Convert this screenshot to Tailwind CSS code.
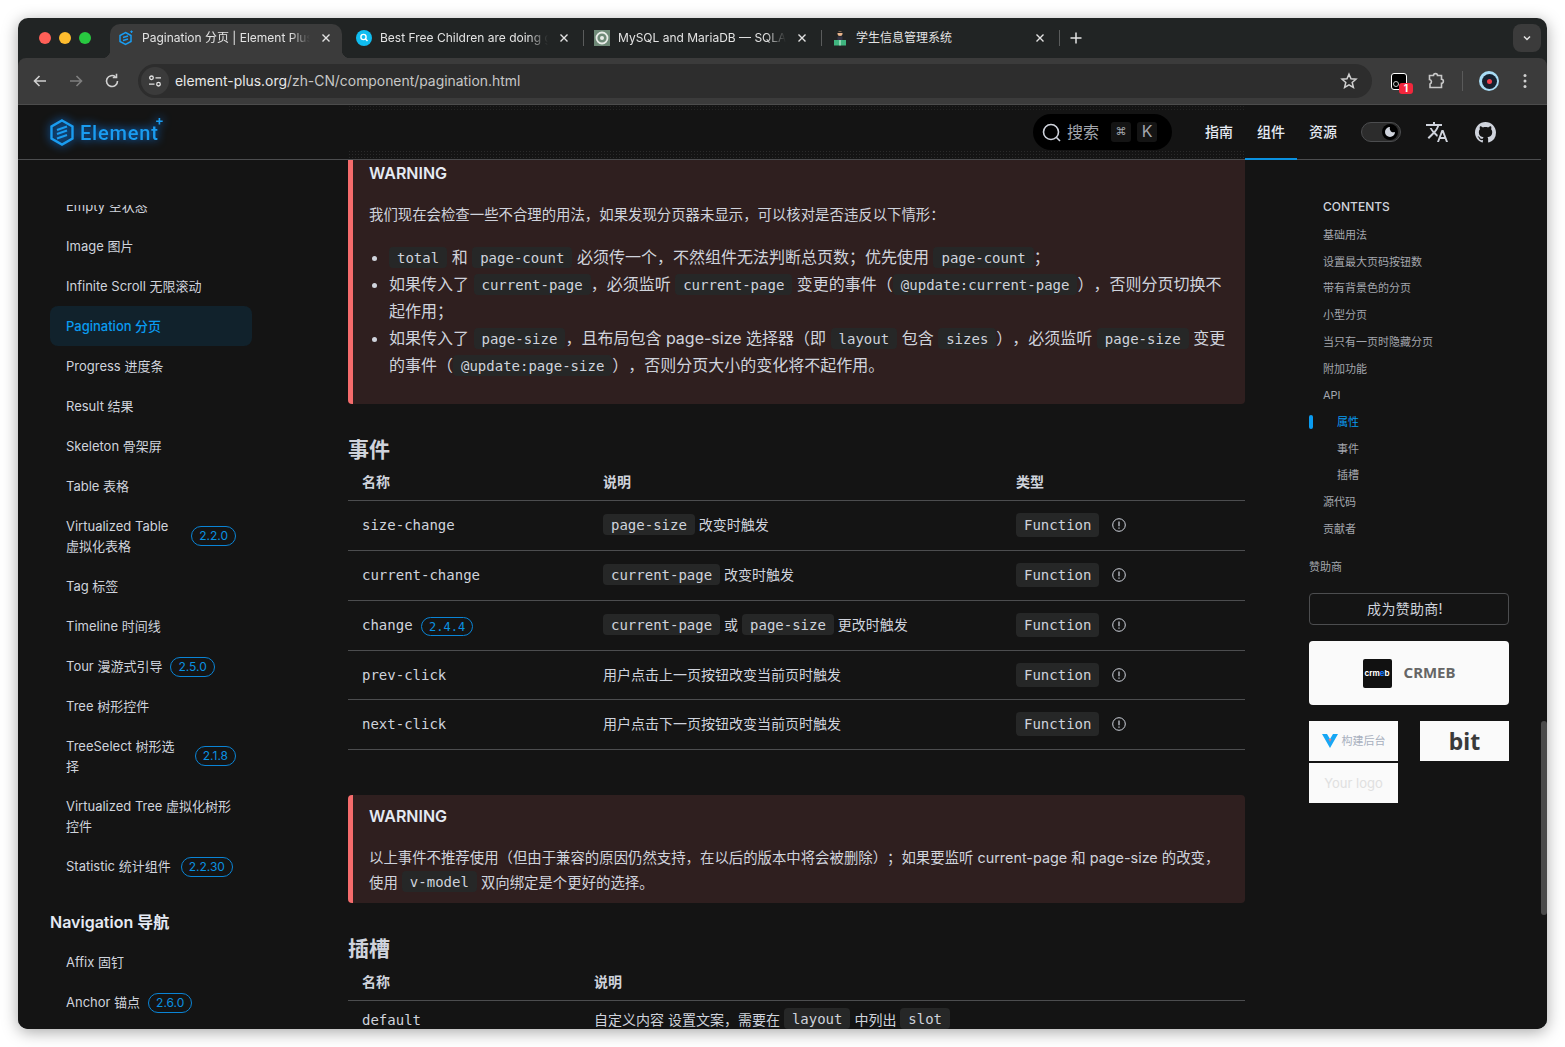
<!DOCTYPE html>
<html lang="zh-CN">

<head>
    <meta charset="UTF-8">
    <title>Pagination 分页 | Element Plus</title>
    <script src="https://cdn.jsdelivr.net/npm/@tailwindcss/browser@4"></script>
</head>

<body class="bg-white h-screen overflow-hidden p-[18px] [text-spacing-trim:space-all] font-['Inter','Noto_Sans_CJK_SC',sans-serif]">

    <!-- Browser window -->
    <div class="w-[1529px] h-[1011px] flex flex-col rounded-[10px] overflow-hidden bg-[#212424] shadow-[0_3px_16px_rgba(0,0,0,0.35)]">

        <!-- Tab strip -->
        <div class="relative h-10 shrink-0 flex items-end pl-[92px] text-xs text-[#e3e3e3]">
            <div class="absolute left-[21px] top-[14px] flex gap-2">
                <span class="w-3 h-3 rounded-full bg-[#ff5f57]"></span>
                <span class="w-3 h-3 rounded-full bg-[#febc2e]"></span>
                <span class="w-3 h-3 rounded-full bg-[#28c840]"></span>
            </div>

            <!-- Active tab -->
            <div class="relative w-[232px] h-[34px] flex items-center pl-2 pr-2 pb-[6px] bg-[#3b3b3b] rounded-t-[10px]">
                <span class="absolute -left-2 bottom-0 w-2 h-2 bg-[radial-gradient(circle_at_0_0,transparent_8px,#3b3b3b_8.5px)]"></span>
                <span class="absolute -right-2 bottom-0 w-2 h-2 bg-[radial-gradient(circle_at_100%_0,transparent_8px,#3b3b3b_8.5px)]"></span>
                <svg class="w-4 h-4 shrink-0" viewBox="0 0 16 16" fill="none" stroke="#1a9cf0" stroke-width="1.5">
                    <path d="M7.5 2.5 L13 5.5 V11.5 L7.5 14.5 L2 11.5 V5.5 Z" />
                    <path d="M5 7.5 L10 6 M5 10.5 L10 9" />
                    <path d="M13.5 0.5 V3 M12.2 1.7 H14.8" stroke-width="1" />
                </svg>
                <span class="ml-2 w-[168px] whitespace-nowrap overflow-hidden [mask-image:linear-gradient(to_right,black_88%,transparent)]">Pagination 分页 | Element Plus</span>
                <svg class="w-3 h-3 ml-auto mr-[2px] shrink-0" viewBox="0 0 12 12" stroke="#e3e3e3" stroke-width="1.4"><path d="M2.5 2.5 L9.5 9.5 M9.5 2.5 L2.5 9.5" /></svg>
            </div>

            <!-- Tab 2 -->
            <div class="ml-[6px] w-[232px] h-[34px] flex items-center px-2 pb-[6px]">
                <svg class="w-4 h-4 shrink-0" viewBox="0 0 16 16"><circle cx="8" cy="8" r="8" fill="#10bdf0" /><circle cx="7.5" cy="7" r="2.6" fill="none" stroke="#fff" stroke-width="1.4" /><path d="M9.5 9 L11.5 11" stroke="#fff" stroke-width="1.4" /></svg>
                <span class="ml-2 w-[168px] whitespace-nowrap overflow-hidden [mask-image:linear-gradient(to_right,black_88%,transparent)]">Best Free Children are doing great things</span>
                <svg class="w-3 h-3 ml-auto mr-[2px] shrink-0" viewBox="0 0 12 12" stroke="#e3e3e3" stroke-width="1.4"><path d="M2.5 2.5 L9.5 9.5 M9.5 2.5 L2.5 9.5" /></svg>
            </div>
            <span class="mx-[2.5px] mb-[12px] w-px h-[16px] bg-[#5a5c5c]"></span>

            <!-- Tab 3 -->
            <div class="w-[232px] h-[34px] flex items-center px-2 pb-[6px]">
                <svg class="w-4 h-4 shrink-0" viewBox="0 0 16 16"><rect width="16" height="16" fill="#6f8a78" /><circle cx="8" cy="8" r="5.5" fill="none" stroke="#e8ece8" stroke-width="1.8" /><circle cx="8" cy="8" r="2" fill="#e8ece8" /></svg>
                <span class="ml-2 w-[168px] whitespace-nowrap overflow-hidden [mask-image:linear-gradient(to_right,black_88%,transparent)]">MySQL and MariaDB — SQLAlchemy</span>
                <svg class="w-3 h-3 ml-auto mr-[2px] shrink-0" viewBox="0 0 12 12" stroke="#e3e3e3" stroke-width="1.4"><path d="M2.5 2.5 L9.5 9.5 M9.5 2.5 L2.5 9.5" /></svg>
            </div>
            <span class="mx-[2.5px] mb-[12px] w-px h-[16px] bg-[#5a5c5c]"></span>

            <!-- Tab 4 -->
            <div class="w-[232px] h-[34px] flex items-center px-2 pb-[6px]">
                <svg class="w-4 h-4 shrink-0" viewBox="0 0 16 16"><circle cx="8" cy="3.5" r="2.5" fill="#e8b48c" /><path d="M5 1.5 H11 V3 H5 Z" fill="#222" /><path d="M5.5 6.5 H10.5 V10 H5.5 Z" fill="#334" /><path d="M2 10 H14 V15.5 H2 Z" fill="#3fb57f" /><path d="M8 10 V15.5" stroke="#d8f5e6" /></svg>
                <span class="ml-2">学生信息管理系统</span>
                <svg class="w-3 h-3 ml-auto mr-[2px] shrink-0" viewBox="0 0 12 12" stroke="#e3e3e3" stroke-width="1.4"><path d="M2.5 2.5 L9.5 9.5 M9.5 2.5 L2.5 9.5" /></svg>
            </div>
            <span class="mx-[2.5px] mb-[12px] w-px h-[16px] bg-[#5a5c5c]"></span>
            <svg class="ml-[7px] mb-[13px] w-[14px] h-[14px]" viewBox="0 0 14 14" stroke="#e3e3e3" stroke-width="1.5"><path d="M7 1.5 V12.5 M1.5 7 H12.5" /></svg>

            <button class="absolute right-[6px] top-[6px] w-7 h-7 flex items-center justify-center rounded-lg bg-[#3b3b3b]">
                <svg class="w-3 h-3" viewBox="0 0 12 12" fill="none" stroke="#e3e3e3" stroke-width="1.5"><path d="M3 4.5 L6 7.5 L9 4.5" /></svg>
            </button>
        </div>

        <!-- Toolbar -->
        <div class="h-[47px] shrink-0 flex items-center pl-3 bg-[#3b3b3b] rounded-t-lg border-b border-[#4c4c4c]">
            <svg class="w-5 h-5" viewBox="0 0 20 20" fill="none" stroke="#d0d0d0" stroke-width="1.6"><path d="M16 10 H4.5 M9.5 5 L4.5 10 L9.5 15" /></svg>
            <svg class="w-5 h-5 ml-4" viewBox="0 0 20 20" fill="none" stroke="#7f7f7f" stroke-width="1.6"><path d="M4 10 H15.5 M10.5 5 L15.5 10 L10.5 15" /></svg>
            <svg class="w-5 h-5 ml-4" viewBox="0 0 20 20" fill="none" stroke="#d0d0d0" stroke-width="1.6"><path d="M15.5 10 A5.5 5.5 0 1 1 13.5 5.8" /><path d="M14.5 2.8 V6.5 H10.8" /></svg>

            <!-- Address bar -->
            <div class="ml-4 w-[1234px] h-[34px] flex items-center pl-[3px] pr-[14px] rounded-full bg-[#2d2d2d]">
                <span class="w-[28px] h-[28px] rounded-full bg-[#3b3b3b] flex items-center justify-center">
                    <svg class="w-4 h-4" viewBox="0 0 16 16" fill="none" stroke="#e3e3e3" stroke-width="1.3"><circle cx="4.5" cy="4.8" r="1.8" /><path d="M8.5 4.8 H14" /><circle cx="11.5" cy="11.2" r="1.8" /><path d="M2 11.2 H7.5" /></svg>
                </span>
                <span class="ml-[6px] text-[13.9px] text-[#e8e8e8] whitespace-nowrap">element-plus.org<span class="text-[#c7c7c7]">/zh-CN/component/pagination.html</span></span>
                <svg class="w-[18px] h-[18px] ml-auto" viewBox="0 0 18 18" fill="none" stroke="#d0d0d0" stroke-width="1.5"><path d="M9 2.2 L11 6.8 L16 7.2 L12.2 10.5 L13.4 15.4 L9 12.8 L4.6 15.4 L5.8 10.5 L2 7.2 L7 6.8 Z" /></svg>
            </div>

            <!-- Extensions -->
            <span class="relative ml-[17px] w-5 h-5 flex items-center justify-center">
                <span class="w-[16px] h-[17px] rounded-[3px] bg-black border border-white"></span>
                <span class="absolute left-[4px] bottom-[4px] w-[6px] h-[6px] rounded-full border border-[#cccccc]"></span>
                <span class="absolute left-[10px] top-[12px] w-[14px] h-[11px] rounded-[3px] bg-[#f2273c] text-white text-[10px] font-bold leading-[11px] text-center">1</span>
            </span>
            <svg class="ml-[17px] w-5 h-5" viewBox="0 0 20 20" fill="none" stroke="#c8c8c8" stroke-width="1.6"><path d="M3.5 4.5 H7.5 C7.5 2 11.5 2 11.5 4.5 H15.5 V8.2 C18 8.2 18 12.2 15.5 12.2 V16.5 H4 V13 C6 12 6 9 3.5 8.5 Z" /></svg>
            <span class="ml-[16px] w-px h-[20px] bg-[#5a5a5a]"></span>
            <span class="ml-[16px] w-5 h-5 rounded-full bg-[#a8dcf5] flex items-center justify-center">
                <span class="w-[15px] h-[15px] rounded-full bg-[#16202e] flex items-center justify-center"><span class="w-[5px] h-[5px] rounded-full bg-[#ef3f4c]"></span></span>
            </span>
            <svg class="ml-[16px] w-5 h-5" viewBox="0 0 20 20" fill="#d0d0d0"><circle cx="10" cy="4.5" r="1.5" /><circle cx="10" cy="10" r="1.5" /><circle cx="10" cy="15.5" r="1.5" /></svg>
        </div>

        <!-- Page -->
        <div class="relative flex-1 min-h-0 flex flex-col bg-[#141414] text-[#cfd3dc]">

            <!-- Site header -->
            <header class="relative h-[55px] shrink-0 mr-[6px] flex items-center border-b border-[#4c4d4f]">
                <!-- blurred content dots under the header -->
                <div class="absolute left-[330px] w-[897px] top-0 h-[6px] bg-[radial-gradient(#242424_1px,transparent_1px)] bg-[size:3px_3px]"></div>
                <div class="absolute left-[330px] w-[897px] bottom-0 h-[9px] bg-[radial-gradient(#2a2a2a_1px,transparent_1px)] bg-[size:3px_3px]"></div>

                <!-- Logo -->
                <div class="relative ml-8 flex items-center gap-[6px] text-[#1a9cf0] drop-shadow-[0_0_5px_#0a84ff]">
                    <svg class="w-6 h-[27px]" viewBox="0 0 24 27" fill="none" stroke="#1a9cf0" stroke-width="2.4">
                        <path d="M12 1.5 L22.5 7.5 V19.5 L12 25.5 L1.5 19.5 V7.5 Z" />
                        <path d="M7 11 L17 7.5 M7 15 L17 11.5 M7 19.5 L17 16" stroke-width="2" />
                    </svg>
                    <span class="mt-[2px] font-['Roboto',sans-serif] text-[20px] font-medium tracking-[0.8px] leading-none">Element</span>
                    <span class="absolute left-[105px] -top-[5px] text-[13px] font-bold leading-none">+</span>
                </div>

                <!-- Search -->
                <div class="relative ml-auto w-[139px] h-9 flex items-center pl-[9px] rounded-full bg-black text-[#a3a6ad]">
                    <svg class="w-[19px] h-[19px]" viewBox="0 0 19 19" fill="none" stroke="#cfd3dc" stroke-width="1.6"><circle cx="9" cy="9" r="7.5" /><path d="M14.5 14.5 L18 18" /></svg>
                    <span class="ml-[6px] text-base">搜索</span>
                    <span class="ml-3 w-5 h-5 rounded-[3px] bg-[#141414] text-[11px] leading-[18px] text-center">⌘</span>
                    <span class="ml-[6px] w-5 h-5 rounded-[3px] bg-[#141414] text-base leading-[18px] text-center">K</span>
                </div>

                <!-- Nav -->
                <nav class="relative ml-[21px] h-full flex text-sm font-medium text-[#e5eaf3]">
                    <a class="w-[52px] flex items-center justify-center">指南</a>
                    <a class="w-[52px] flex items-center justify-center -mb-px border-b-2 border-[#0a91e0]">组件</a>
                    <a class="w-[52px] flex items-center justify-center">资源</a>
                </nav>

                <!-- Theme switch -->
                <div class="relative ml-3 w-10 h-5 flex items-center justify-end pr-[2px] rounded-full bg-[#2c2c2c] border border-[#4c4d4f]">
                    <span class="w-4 h-4 rounded-full bg-black flex items-center justify-center">
                        <svg class="w-3 h-3" viewBox="0 0 12 12" fill="#cfd3dc"><path d="M6 1 A5 5 0 1 0 11 6 A3.8 3.8 0 0 1 6 1 Z" /></svg>
                    </span>
                </div>
                <svg class="relative ml-[24px] w-6 h-6" viewBox="0 0 24 24" fill="#cfd3dc"><path d="M12.87 15.07l-2.54-2.51.03-.03c1.74-1.94 2.98-4.17 3.71-6.53H17V4h-7V2H8v2H1v1.99h11.17C11.5 7.92 10.44 9.75 9 11.35 8.07 10.32 7.3 9.19 6.69 8h-2c.73 1.63 1.73 3.17 2.98 4.56l-5.09 5.02L4 19l5-5 3.11 3.11.76-2.04zM18.5 10h-2L12 22h2l1.12-3h4.75L21 22h2l-4.5-12zm-2.62 7l1.62-4.33L19.12 17h-3.24z" /></svg>
                <svg class="relative ml-[25.5px] mr-[45.5px] w-[21px] h-[21px]" viewBox="0 0 16 16" fill="#cfd3dc"><path d="M8 0C3.58 0 0 3.58 0 8c0 3.54 2.29 6.53 5.47 7.59.4.07.55-.17.55-.38 0-.19-.01-.82-.01-1.49-2.01.37-2.53-.49-2.69-.94-.09-.23-.48-.94-.82-1.13-.28-.15-.68-.52-.01-.53.63-.01 1.08.58 1.23.82.72 1.21 1.87.87 2.33.66.07-.52.28-.87.51-1.07-1.78-.2-3.64-.89-3.64-3.95 0-.87.31-1.59.82-2.15-.08-.2-.36-1.02.08-2.12 0 0 .67-.21 2.2.82.64-.18 1.32-.27 2-.27s1.36.09 2 .27c1.53-1.04 2.2-.82 2.2-.82.44 1.1.16 1.92.08 2.12.51.56.82 1.27.82 2.15 0 3.07-1.87 3.75-3.65 3.95.29.25.54.73.54 1.48 0 1.07-.01 1.93-.01 2.2 0 .21.15.46.55.38A8.01 8.01 0 0 0 16 8c0-4.42-3.58-8-8-8z" /></svg>
            </header>

            <div class="flex-1 min-h-0 flex overflow-hidden">

                <!-- Sidebar -->
                <aside class="w-[330px] shrink-0 mt-[45px] overflow-hidden pl-8 text-[13px]">
                    <div class="w-[202px] -mt-[19px] [&>a.h-10]:pt-[2px]">
                        <a class="h-10 flex items-center px-4">Empty 空状态</a>
                        <a class="h-10 flex items-center px-4">Image 图片</a>
                        <a class="h-10 flex items-center px-4">Infinite Scroll 无限滚动</a>
                        <a class="h-10 flex items-center px-4 rounded-lg bg-[#11222c] text-[#0a9bf0] font-medium">Pagination 分页</a>
                        <a class="h-10 flex items-center px-4">Progress 进度条</a>
                        <a class="h-10 flex items-center px-4">Result 结果</a>
                        <a class="h-10 flex items-center px-4">Skeleton 骨架屏</a>
                        <a class="h-10 flex items-center px-4">Table 表格</a>
                        <a class="h-[60px] flex items-center justify-between px-4 leading-5"><span class="w-[112px]">Virtualized Table 虚拟化表格</span><span class="h-5 px-[7px] rounded-full border border-[#0a84d6] text-[#0a91e0] text-xs leading-[18px]">2.2.0</span></a>
                        <a class="h-10 flex items-center px-4">Tag 标签</a>
                        <a class="h-10 flex items-center px-4">Timeline 时间线</a>
                        <a class="h-10 flex items-center gap-2 px-4">Tour 漫游式引导<span class="h-5 px-[7px] rounded-full border border-[#0a84d6] text-[#0a91e0] text-xs leading-[18px]">2.5.0</span></a>
                        <a class="h-10 flex items-center px-4">Tree 树形控件</a>
                        <a class="h-[60px] flex items-center justify-between px-4 leading-5"><span class="w-[112px]">TreeSelect 树形选择</span><span class="h-5 px-[7px] rounded-full border border-[#0a84d6] text-[#0a91e0] text-xs leading-[18px]">2.1.8</span></a>
                        <a class="h-[60px] flex items-center px-4 leading-5">Virtualized Tree 虚拟化树形控件</a>
                        <a class="h-10 flex items-center gap-[10px] px-4">Statistic 统计组件<span class="h-5 px-[7px] rounded-full border border-[#0a84d6] text-[#0a91e0] text-xs leading-[18px]">2.2.30</span></a>
                    </div>
                    <h2 class="mt-5 h-8 flex items-center text-base font-semibold text-[#e5eaf3]">Navigation 导航</h2>
                    <div class="w-[202px] mt-1 [&>a.h-10]:pt-[2px]">
                        <a class="h-10 flex items-center px-4">Affix 固钉</a>
                        <a class="h-10 flex items-center gap-2 px-4">Anchor 锚点<span class="h-5 px-[7px] rounded-full border border-[#0a84d6] text-[#0a91e0] text-xs leading-[18px]">2.6.0</span></a>
                    </div>
                </aside>

                <!-- Content -->
                <main class="w-[897px] shrink-0 overflow-hidden">

                    <div class="pt-[3px] pb-[25px] pl-4 pr-[18px] rounded-b border-l-[5px] border-[#f56c6c] bg-[#2f1f1f]">
                        <p class="text-base leading-5 font-semibold text-[#e5eaf3]">WARNING</p>
                        <p class="mt-[19px] text-[14.4px] leading-[25px]">我们现在会检查一些不合理的用法，如果发现分页器未显示，可以核对是否违反以下情形：</p>
                        <ul class="mt-[17px] pl-5 list-disc text-base leading-[27px]">
                            <li><code class="rounded bg-[#262727] px-2 py-[2.5px] leading-none align-[1px] text-sm font-['DejaVu_Sans_Mono',monospace]">total</code> 和 <code class="rounded bg-[#262727] px-2 py-[2.5px] leading-none align-[1px] text-sm font-['DejaVu_Sans_Mono',monospace]">page-count</code> 必须传一个，不然组件无法判断总页数；优先使用 <code class="rounded bg-[#262727] px-2 py-[2.5px] leading-none align-[1px] text-sm font-['DejaVu_Sans_Mono',monospace]">page-count</code>；</li>
                            <li>如果传入了 <code class="rounded bg-[#262727] px-2 py-[2.5px] leading-none align-[1px] text-sm font-['DejaVu_Sans_Mono',monospace]">current-page</code>，必须监听 <code class="rounded bg-[#262727] px-2 py-[2.5px] leading-none align-[1px] text-sm font-['DejaVu_Sans_Mono',monospace]">current-page</code> 变更的事件（<code class="rounded bg-[#262727] px-2 py-[2.5px] leading-none align-[1px] text-sm font-['DejaVu_Sans_Mono',monospace]">@update:current-page</code>），否则分页切换不起作用；</li>
                            <li>如果传入了 <code class="rounded bg-[#262727] px-2 py-[2.5px] leading-none align-[1px] text-sm font-['DejaVu_Sans_Mono',monospace]">page-size</code>，且布局包含 page-size 选择器（即 <code class="rounded bg-[#262727] px-2 py-[2.5px] leading-none align-[1px] text-sm font-['DejaVu_Sans_Mono',monospace]">layout</code> 包含 <code class="rounded bg-[#262727] px-2 py-[2.5px] leading-none align-[1px] text-sm font-['DejaVu_Sans_Mono',monospace]">sizes</code>），必须监听 <code class="rounded bg-[#262727] px-2 py-[2.5px] leading-none align-[1px] text-sm font-['DejaVu_Sans_Mono',monospace]">page-size</code> 变更的事件（<code class="rounded bg-[#262727] px-2 py-[2.5px] leading-none align-[1px] text-sm font-['DejaVu_Sans_Mono',monospace]">@update:page-size</code>），否则分页大小的变化将不起作用。</li>
                        </ul>
                    </div>

                    <h2 class="mt-[32px] text-[21px] leading-7 font-semibold">事件</h2>
                    <table class="w-full table-fixed border-collapse text-sm">
                        <thead>
                            <tr class="h-[36px] border-b border-[#4c4d4f] text-left">
                                <th class="w-[241px] pl-[14px] font-semibold">名称</th>
                                <th class="w-[413px] pl-[14px] font-semibold">说明</th>
                                <th class="pl-[14px] font-semibold">类型</th>
                            </tr>
                        </thead>
                        <tbody>
                            <tr class="h-[50px] border-b border-[#4c4d4f]">
                                <td class="pl-[14px] font-['DejaVu_Sans_Mono',monospace]">size-change</td>
                                <td class="pl-[14px]"><code class="rounded bg-[#262727] px-2 py-[2.5px] leading-none align-[1px] font-['DejaVu_Sans_Mono',monospace]">page-size</code> 改变时触发</td>
                                <td class="pl-[14px]"><span class="inline-flex items-center"><code class="rounded bg-[#262727] px-2 py-[2px] font-['DejaVu_Sans_Mono',monospace]">Function</code><svg class="ml-[13px] w-[14px] h-[14px]" viewBox="0 0 14 14" fill="none" stroke="#cfd3dc"><circle cx="7" cy="7" r="6.3" /><path d="M7 3.5 V8.2 M7 9.6 V10.8" stroke-width="1.2" /></svg></span></td>
                            </tr>
                            <tr class="h-[50px] border-b border-[#4c4d4f]">
                                <td class="pl-[14px] font-['DejaVu_Sans_Mono',monospace]">current-change</td>
                                <td class="pl-[14px]"><code class="rounded bg-[#262727] px-2 py-[2.5px] leading-none align-[1px] font-['DejaVu_Sans_Mono',monospace]">current-page</code> 改变时触发</td>
                                <td class="pl-[14px]"><span class="inline-flex items-center"><code class="rounded bg-[#262727] px-2 py-[2px] font-['DejaVu_Sans_Mono',monospace]">Function</code><svg class="ml-[13px] w-[14px] h-[14px]" viewBox="0 0 14 14" fill="none" stroke="#cfd3dc"><circle cx="7" cy="7" r="6.3" /><path d="M7 3.5 V8.2 M7 9.6 V10.8" stroke-width="1.2" /></svg></span></td>
                            </tr>
                            <tr class="h-[50px] border-b border-[#4c4d4f]">
                                <td class="pl-[14px] font-['DejaVu_Sans_Mono',monospace]">change <span class="px-[7px] py-[1.5px] rounded-full border border-[#0a84d6] text-[#0a91e0] text-xs">2.4.4</span></td>
                                <td class="pl-[14px]"><code class="rounded bg-[#262727] px-2 py-[2.5px] leading-none align-[1px] font-['DejaVu_Sans_Mono',monospace]">current-page</code> 或 <code class="rounded bg-[#262727] px-2 py-[2.5px] leading-none align-[1px] font-['DejaVu_Sans_Mono',monospace]">page-size</code> 更改时触发</td>
                                <td class="pl-[14px]"><span class="inline-flex items-center"><code class="rounded bg-[#262727] px-2 py-[2px] font-['DejaVu_Sans_Mono',monospace]">Function</code><svg class="ml-[13px] w-[14px] h-[14px]" viewBox="0 0 14 14" fill="none" stroke="#cfd3dc"><circle cx="7" cy="7" r="6.3" /><path d="M7 3.5 V8.2 M7 9.6 V10.8" stroke-width="1.2" /></svg></span></td>
                            </tr>
                            <tr class="h-[49px] border-b border-[#4c4d4f]">
                                <td class="pl-[14px] font-['DejaVu_Sans_Mono',monospace]">prev-click</td>
                                <td class="pl-[14px]">用户点击上一页按钮改变当前页时触发</td>
                                <td class="pl-[14px]"><span class="inline-flex items-center"><code class="rounded bg-[#262727] px-2 py-[2px] font-['DejaVu_Sans_Mono',monospace]">Function</code><svg class="ml-[13px] w-[14px] h-[14px]" viewBox="0 0 14 14" fill="none" stroke="#cfd3dc"><circle cx="7" cy="7" r="6.3" /><path d="M7 3.5 V8.2 M7 9.6 V10.8" stroke-width="1.2" /></svg></span></td>
                            </tr>
                            <tr class="h-[50px] border-b border-[#4c4d4f]">
                                <td class="pl-[14px] font-['DejaVu_Sans_Mono',monospace]">next-click</td>
                                <td class="pl-[14px]">用户点击下一页按钮改变当前页时触发</td>
                                <td class="pl-[14px]"><span class="inline-flex items-center"><code class="rounded bg-[#262727] px-2 py-[2px] font-['DejaVu_Sans_Mono',monospace]">Function</code><svg class="ml-[13px] w-[14px] h-[14px]" viewBox="0 0 14 14" fill="none" stroke="#cfd3dc"><circle cx="7" cy="7" r="6.3" /><path d="M7 3.5 V8.2 M7 9.6 V10.8" stroke-width="1.2" /></svg></span></td>
                            </tr>
                        </tbody>
                    </table>

                    <div class="mt-[45px] pt-[11px] pb-2 pl-4 pr-5 rounded border-l-[5px] border-[#f56c6c] bg-[#2f1f1f]">
                        <p class="text-base leading-5 font-semibold text-[#e5eaf3]">WARNING</p>
                        <p class="mt-[19px] text-[14.4px] leading-[25px]">以上事件不推荐使用（但由于兼容的原因仍然支持，在以后的版本中将会被删除）；如果要监听 current-page 和 page-size 的改变，使用 <code class="rounded bg-[#262727] px-2 py-[2.5px] leading-none align-[1px] text-sm font-['DejaVu_Sans_Mono',monospace]">v-model</code> 双向绑定是个更好的选择。</p>
                    </div>

                    <h2 class="mt-[32px] text-[21px] leading-7 font-semibold">插槽</h2>
                    <table class="w-full table-fixed border-collapse text-sm">
                        <thead>
                            <tr class="h-[38px] border-b border-[#4c4d4f] text-left">
                                <th class="w-[232px] pl-[14px] pt-[2px] font-semibold">名称</th>
                                <th class="pl-[14px] pt-[2px] font-semibold">说明</th>
                            </tr>
                        </thead>
                        <tbody>
                            <tr class="h-[38px]">
                                <td class="pl-[14px] font-['DejaVu_Sans_Mono',monospace]">default</td>
                                <td class="pl-[14px]">自定义内容 设置文案，需要在 <code class="rounded bg-[#262727] px-2 py-[2.5px] leading-none align-[1px] font-['DejaVu_Sans_Mono',monospace]">layout</code> 中列出 <code class="rounded bg-[#262727] px-2 py-[2.5px] leading-none align-[1px] font-['DejaVu_Sans_Mono',monospace]">slot</code></td>
                            </tr>
                        </tbody>
                    </table>
                </main>

                <!-- Table of contents -->
                <aside class="relative ml-16 w-[200px] shrink-0 text-[11px] text-[#a3a6ad]">
                    <p class="mt-[39px] pl-[14px] text-xs leading-4 font-medium text-[#cfd3dc]">CONTENTS</p>
                    <span class="absolute left-0 top-[255px] w-1 h-[14px] rounded-full bg-[#0a9bf0]"></span>
                    <ul class="mt-[7px] pl-[14px]">
                        <li class="h-[26.7px] flex items-center">基础用法</li>
                        <li class="h-[26.7px] flex items-center">设置最大页码按钮数</li>
                        <li class="h-[26.7px] flex items-center">带有背景色的分页</li>
                        <li class="h-[26.7px] flex items-center">小型分页</li>
                        <li class="h-[26.7px] flex items-center">当只有一页时隐藏分页</li>
                        <li class="h-[26.7px] flex items-center">附加功能</li>
                        <li class="h-[26.7px] flex items-center">API</li>
                        <li class="h-[26.7px] flex items-center pl-[14px] text-[#0a9bf0]">属性</li>
                        <li class="h-[26.7px] flex items-center pl-[14px]">事件</li>
                        <li class="h-[26.7px] flex items-center pl-[14px]">插槽</li>
                        <li class="h-[26.7px] flex items-center">源代码</li>
                        <li class="h-[26.7px] flex items-center">贡献者</li>
                    </ul>
                    <p class="mt-[17px] leading-4">赞助商</p>
                    <button class="mt-[18px] w-full h-8 pr-2 rounded border border-[#4c4d4f] text-sm tracking-[0.3px] text-[#cfd3dc]">成为赞助商!</button>

                    <!-- Sponsors -->
                    <div class="mt-4 h-16 flex items-center justify-center gap-3 rounded bg-[#fafafa]">
                        <span class="w-[29px] h-[29px] rounded-[2px] bg-[#111111] flex items-center justify-center text-[8px] font-bold text-white">crm<span class="text-[#1677ff]">e</span>b</span>
                        <span class="pb-[2px] font-['Noto_Sans',sans-serif] text-[15px] font-bold text-[#666666]">CRMEB</span>
                    </div>
                    <div class="mt-4 grid grid-cols-2 gap-x-[22px] gap-y-[2px]">
                        <div class="h-10 flex items-center justify-center gap-[4px] bg-[#fafafa] text-[#a8b0be]">
                            <svg class="w-4 h-[14px]" viewBox="0 0 16 14"><path d="M0 0 H5 L8 5 L11 0 H16 L8 14 Z" fill="#17a7f5" /><path d="M6.5 5 H9.5 L8 8 Z" fill="#e9747e" /></svg>
                            <span>构建后台</span>
                        </div>
                        <div class="h-10 flex items-center justify-center bg-[#fafafa] font-['Noto_Sans',sans-serif] text-[23px] font-bold text-[#3a3a3a]">bit</div>
                        <div class="h-10 flex items-center justify-center bg-[#fafafa] text-[13px] text-[#e0e0e0]">Your logo</div>
                    </div>
                </aside>
            </div>

            <!-- Scrollbar -->
            <span class="absolute right-0 top-[616px] w-[6px] h-[194px] rounded-full bg-[#4a4a4a]"></span>
        </div>
    </div>

</body>

</html>
